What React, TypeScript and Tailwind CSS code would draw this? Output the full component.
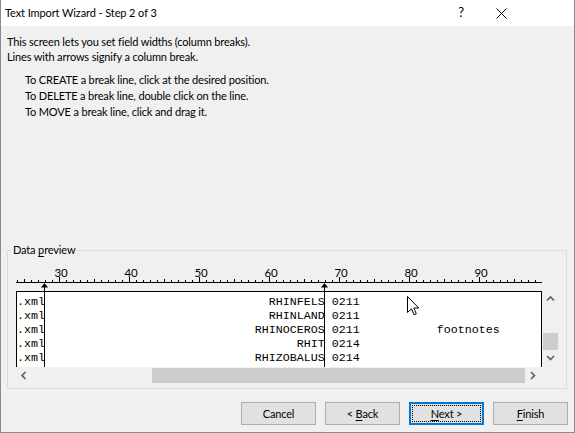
import React from "react";

const rows = [
  { name: "RHINFELS", code: "0211", note: "" },
  { name: "RHINLAND", code: "0211", note: "" },
  { name: "RHINOCEROS", code: "0211", note: "footnotes" },
  { name: "RHIT", code: "0214", note: "" },
  { name: "RHIZOBALUS", code: "0214", note: "" },
];

// char grid: 7px per char, first visible column = 24
const ticks = Array.from({ length: 75 }, (_, k) => ({ x: 1 + 7 * k, col: 24 + k }));
const breaks = [28, 308];

function Chevron({ dir }: { dir: "up" | "down" | "left" | "right" }) {
  const d = {
    up: "M1 5.5 L4.5 2 L8 5.5",
    down: "M1 2 L4.5 5.5 L8 2",
    left: "M5.5 1 L2 4.5 L5.5 8",
    right: "M2 1 L5.5 4.5 L2 8",
  }[dir];
  return (
    <svg width="9" height="9" viewBox="0 0 9 9">
      <path d={d} fill="none" stroke="#606060" strokeWidth="1.7" />
    </svg>
  );
}

function Button({ children, primary }: { children: React.ReactNode; primary?: boolean }) {
  return (
    <button
      className={`relative w-[75px] h-[23px] flex items-center justify-center bg-[#e1e1e1] ${
        primary ? "border-2 border-[#0078d7]" : "border border-[#adadad]"
      }`}
    >
      {primary && <span className="absolute inset-[1px] border border-dotted border-black" />}
      <span className="leading-none">{children}</span>
    </button>
  );
}

export default function App() {
  return (
    <div className="w-[575px] h-[433px] flex flex-col bg-[#f0f0f0] border-x border-b border-[#8a8a8a] font-['Lato',sans-serif] text-[11px] tracking-[-0.15px] text-black overflow-hidden">
      {/* title bar */}
      <div className="h-[26px] shrink-0 bg-white flex items-center pl-[4px]">
        <span className="text-[11px] tracking-[-0.1px]">Text Import Wizard - Step 2 of 3</span>
        <span className="ml-auto w-[40px] text-center text-[13px]">?</span>
        <span className="w-[40px] flex justify-center mr-[53px]">
          <svg width="11" height="11" viewBox="0 0 11 11">
            <path d="M0.5 0.5 L10.5 10.5 M10.5 0.5 L0.5 10.5" stroke="#000" strokeWidth="1" />
          </svg>
        </span>
      </div>

      <div className="flex-1 flex flex-col pl-[6px] pt-[8px] pb-[7px]">
        <div className="leading-[15px]">
          <p>This screen lets you set field widths (column breaks).</p>
          <p>Lines with arrows signify a column break.</p>
        </div>
        <div className="mt-[8px] pl-[18px] leading-[16px]">
          <p>To CREATE a break line, click at the desired position.</p>
          <p>To DELETE a break line, double click on the line.</p>
          <p>To MOVE a break line, click and drag it.</p>
        </div>

        {/* Data preview group */}
        <div className="relative mt-auto mb-[13px] w-[560px] border border-[#dcdcdc] pl-[8px] pr-[7px] pb-[4px]">
          <span className="absolute left-[4px] top-[-9px] px-[1px] leading-[16px] bg-[#f0f0f0]">
            Data <span className="underline underline-offset-2">p</span>review
          </span>

          <svg width="543" height="40" className="block">
            <rect x="0" y="31" width="526" height="1" fill="#000" />
            {ticks.map((t) => {
              const h = t.col % 10 === 0 ? 5 : t.col % 5 === 0 ? 3 : 2;
              return <rect key={t.col} x={t.x} y={31 - h} width="1" height={h} fill="#000" />;
            })}
            {ticks
              .filter((t) => t.col % 10 === 0)
              .map((t) => (
                <text
                  key={"n" + t.col}
                  x={t.x + 2}
                  y="26"
                  textAnchor="middle"
                  fontSize="11.5"
                  fontFamily="Lato, sans-serif"
                  fill="#000"
                >
                  {t.col}
                </text>
              ))}
            {breaks.map((x) => (
              <g key={x}>
                <polygon points={`${x - 3},36.5 ${x + 0.5},32 ${x + 4},36.5`} fill="#000" />
                <rect x={x} y="36" width="1" height="4" fill="#000" />
              </g>
            ))}
          </svg>

          <div className="flex">
            <div className="relative w-[526px] h-[76px] bg-white border-x border-t border-black overflow-hidden">
              <div className="pt-[3px] font-['Liberation_Mono',monospace] text-[11.67px] tracking-normal leading-[14px] whitespace-pre">
                {rows.map((r) => (
                  <div key={r.name}>
                    {".xml" + r.name.padStart(40) + " " + r.code + (r.note ? " ".repeat(11) + r.note : "")}
                  </div>
                ))}
              </div>
              {breaks.map((x) => (
                <div key={x} className="absolute top-0 bottom-0 w-px bg-black" style={{ left: x - 1 }} />
              ))}
              {/* mouse pointer */}
              <svg className="absolute left-[390px] top-[4px]" width="13" height="20" viewBox="0 0 13 20">
                <path
                  d="M0.5 0.5 L0.5 16.5 L4.5 12.8 L7 18.8 L9.3 17.8 L6.8 12 L11.8 12 Z"
                  fill="#fff"
                  stroke="#000"
                  strokeWidth="1"
                  strokeLinejoin="round"
                />
              </svg>
            </div>
            <div className="w-[17px] h-[76px] flex flex-col">
              <div className="h-[17px] flex items-center justify-center">
                <Chevron dir="up" />
              </div>
              <div className="flex-1 flex flex-col justify-end">
                <div className="h-[17px] mx-[1px] bg-[#cdcdcd]" />
              </div>
              <div className="h-[17px] flex items-center justify-center">
                <Chevron dir="down" />
              </div>
            </div>
          </div>

          <div className="flex h-[17px]">
            <div className="w-[526px] flex">
              <div className="w-[17px] flex items-center justify-center">
                <Chevron dir="left" />
              </div>
              <div className="flex-1 flex justify-end py-[1px]">
                <div className="w-[373px] bg-[#cdcdcd]" />
              </div>
              <div className="w-[17px] flex items-center justify-center">
                <Chevron dir="right" />
              </div>
            </div>
            <div className="w-[17px]" />
          </div>
        </div>

        {/* buttons */}
        <div className="flex justify-end gap-[9px] pr-[6px]">
          <Button>Cancel</Button>
          <Button>
            &lt; <span className="underline underline-offset-2">B</span>ack
          </Button>
          <Button primary>
            <span className="underline underline-offset-2">N</span>ext &gt;
          </Button>
          <Button>
            <span className="underline underline-offset-2">F</span>inish
          </Button>
        </div>
      </div>
    </div>
  );
}
